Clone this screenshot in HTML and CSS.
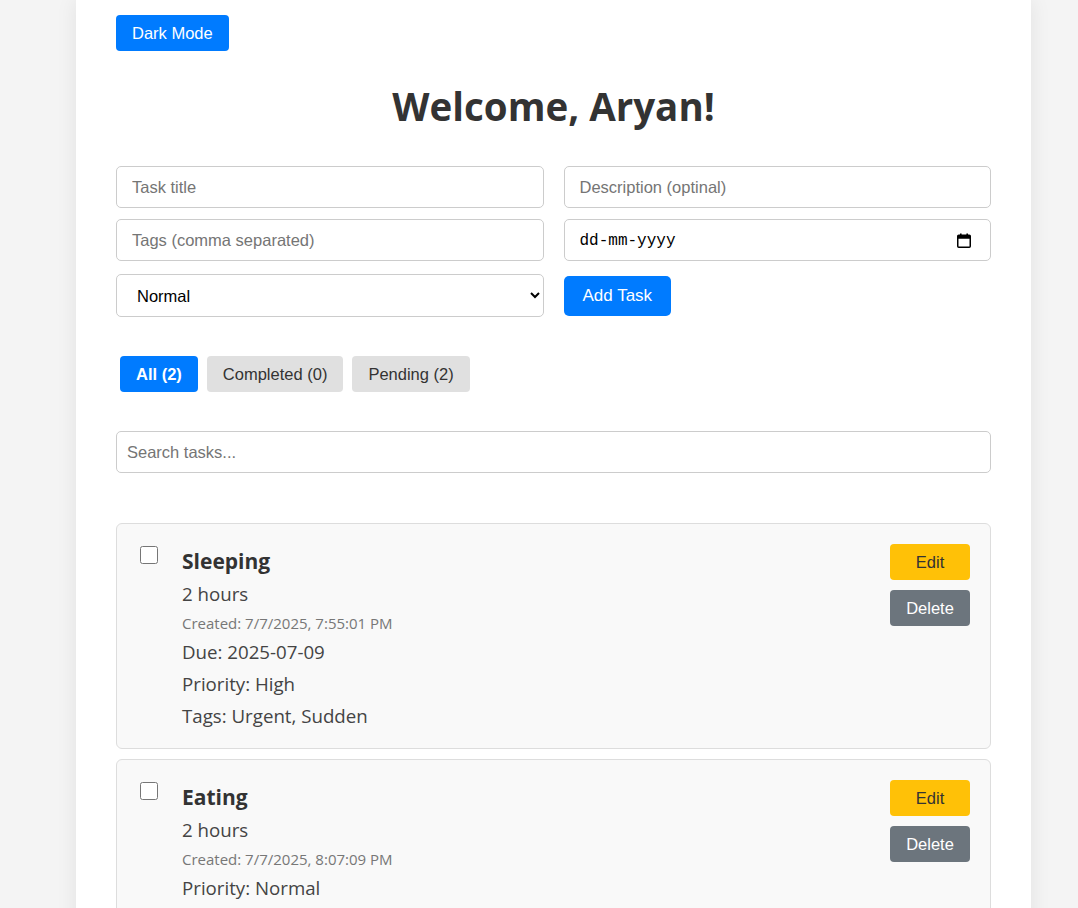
FILE: index.html
```html
<!DOCTYPE html>
<html lang="en">
<head>
<meta charset="utf-8">
<title>Task Manager</title>
<link rel="stylesheet" href="styles.css">
</head>
<body>
<div class="container">
  <button class="btn btn-primary theme-toggle">Dark Mode</button>
  <h1 class="welcome">Welcome, Aryan!</h1>

  <form class="task-form">
    <input class="field" type="text" placeholder="Task title">
    <input class="field" type="text" placeholder="Description (optinal)">
    <input class="field" type="text" placeholder="Tags (comma separated)">
    <label class="field date-field">
      <input class="date-input" type="text" placeholder="dd-mm-yyyy">
      <svg class="cal-icon" width="14" height="15" viewBox="0 0 14 15" aria-hidden="true">
        <rect x="0.75" y="2.25" width="12.5" height="12" rx="1" fill="none" stroke="#000" stroke-width="1.5"/>
        <rect x="0.75" y="2.25" width="12.5" height="3.5" fill="#000"/>
        <rect x="3" y="0.5" width="1.6" height="3" fill="#000"/>
        <rect x="9.4" y="0.5" width="1.6" height="3" fill="#000"/>
      </svg>
    </label>
    <select class="field field-select">
      <option>Normal</option>
      <option>High</option>
      <option>Low</option>
    </select>
    <div class="form-action"><button type="button" class="btn btn-primary btn-add">Add Task</button></div>
  </form>

  <div class="filters">
    <button class="btn filter active">All (2)</button>
    <button class="btn filter">Completed (0)</button>
    <button class="btn filter">Pending (2)</button>
  </div>

  <input class="field search" type="text" placeholder="Search tasks...">

  <ul class="task-list">
    <li class="task">
      <input class="task-check" type="checkbox">
      <div class="task-body">
        <h3 class="task-title">Sleeping</h3>
        <p class="task-line">2 hours</p>
        <p class="task-created">Created: 7/7/2025, 7:55:01 PM</p>
        <p class="task-line">Due: 2025-07-09</p>
        <p class="task-line">Priority: High</p>
        <p class="task-line">Tags: Urgent, Sudden</p>
      </div>
      <div class="task-actions">
        <button class="btn btn-edit">Edit</button>
        <button class="btn btn-delete">Delete</button>
      </div>
    </li>
    <li class="task">
      <input class="task-check" type="checkbox">
      <div class="task-body">
        <h3 class="task-title">Eating</h3>
        <p class="task-line">2 hours</p>
        <p class="task-created">Created: 7/7/2025, 8:07:09 PM</p>
        <p class="task-line">Priority: Normal</p>
      </div>
      <div class="task-actions">
        <button class="btn btn-edit">Edit</button>
        <button class="btn btn-delete">Delete</button>
      </div>
    </li>
  </ul>
</div>
</body>
</html>
```

FILE: styles.css
```css
* { box-sizing: border-box; }

html, body {
  margin: 0;
  padding: 0;
  background: #f4f4f4;
  height: 100%;
  overflow: hidden;
}

body {
  font-family: "Open Sans", "Noto Sans", sans-serif;
  color: #333;
}

.container {
  width: 955px;
  margin-left: 76px;
  min-height: 100%;
  background: #fff;
  padding: 15px 40px 40px;
  box-shadow: 0 0 20px rgba(0, 0, 0, 0.08);
}

.btn {
  font-family: "Liberation Sans", Arial, sans-serif;
  font-size: 16.5px;
  border: none;
  border-radius: 4px;
  padding: 0 16px;
  height: 36px;
  cursor: pointer;
}

.btn-primary {
  background: #007bff;
  color: #fff;
}

.theme-toggle {
  display: block;
}

.welcome {
  text-align: center;
  font-size: 38.5px;
  font-weight: 700;
  margin: 30px 0 35px;
  line-height: 50px;
  color: #333;
}

.task-form {
  display: grid;
  grid-template-columns: 1fr 1fr;
  column-gap: 20px;
  row-gap: 11px;
  align-items: center;
}

.field {
  width: 100%;
  height: 42px;
  border: 1px solid #ccc;
  border-radius: 5px;
  padding: 0 15px;
  font-family: "Liberation Sans", Arial, sans-serif;
  font-size: 16.5px;
  color: #000;
  background: #fff;
}

.field::placeholder { color: #757575; }

.date-field {
  display: flex;
  align-items: center;
  gap: 10px;
  padding: 1px 19px 0 15px;
}

.date-input {
  flex: 1;
  min-width: 0;
  border: none;
  outline: none;
  background: transparent;
  padding: 0;
  font-family: "Liberation Mono", monospace;
  font-size: 16px;
  color: #000;
}

.date-input::placeholder { color: #000; }

.cal-icon {
  flex: none;
  display: block;
}

.field-select {
  height: 43px;
  padding: 0 16px;
  margin-top: 2px;
}

.btn-add {
  height: 40px;
  padding: 0 19px;
  border-radius: 5px;
  font-size: 17px;
}

.form-action {
  display: flex;
  margin-top: 2px;
}

.filters {
  display: flex;
  gap: 9px;
  padding-left: 4px;
  margin-top: 39px;
}

.filter {
  background: #e0e0e0;
  color: #333;
  padding: 0 16px;
}

.filter.active {
  background: #007bff;
  color: #fff;
  font-weight: 700;
}

.search {
  margin-top: 39px;
  padding: 0 10px;
}

.task-list {
  list-style: none;
  margin: 50px 0 0;
  padding: 0;
  display: flex;
  flex-direction: column;
  gap: 10px;
}

.task {
  display: flex;
  align-items: flex-start;
  background: #f9f9f9;
  border: 1px solid #ddd;
  border-radius: 6px;
  padding: 20px 20px 16px;
}

.task-check {
  width: 18px;
  height: 18px;
  margin: 2px 24px 0 3px;
  flex: none;
}

.task-body {
  flex: 1;
}

.task-title {
  margin: 0;
  font-size: 21px;
  font-weight: 700;
  line-height: 34px;
}

.task-line {
  margin: 0;
  font-size: 18.7px;
  line-height: 32px;
  color: #444;
}

.task-created {
  margin: 0;
  font-size: 15px;
  line-height: 26px;
  color: #777;
}

.task-actions {
  display: flex;
  flex-direction: column;
  gap: 10px;
  width: 80px;
}

.btn-edit {
  background: #ffc107;
  color: #333;
  width: 100%;
}

.btn-delete {
  background: #6c757d;
  color: #fff;
  width: 100%;
}
```
